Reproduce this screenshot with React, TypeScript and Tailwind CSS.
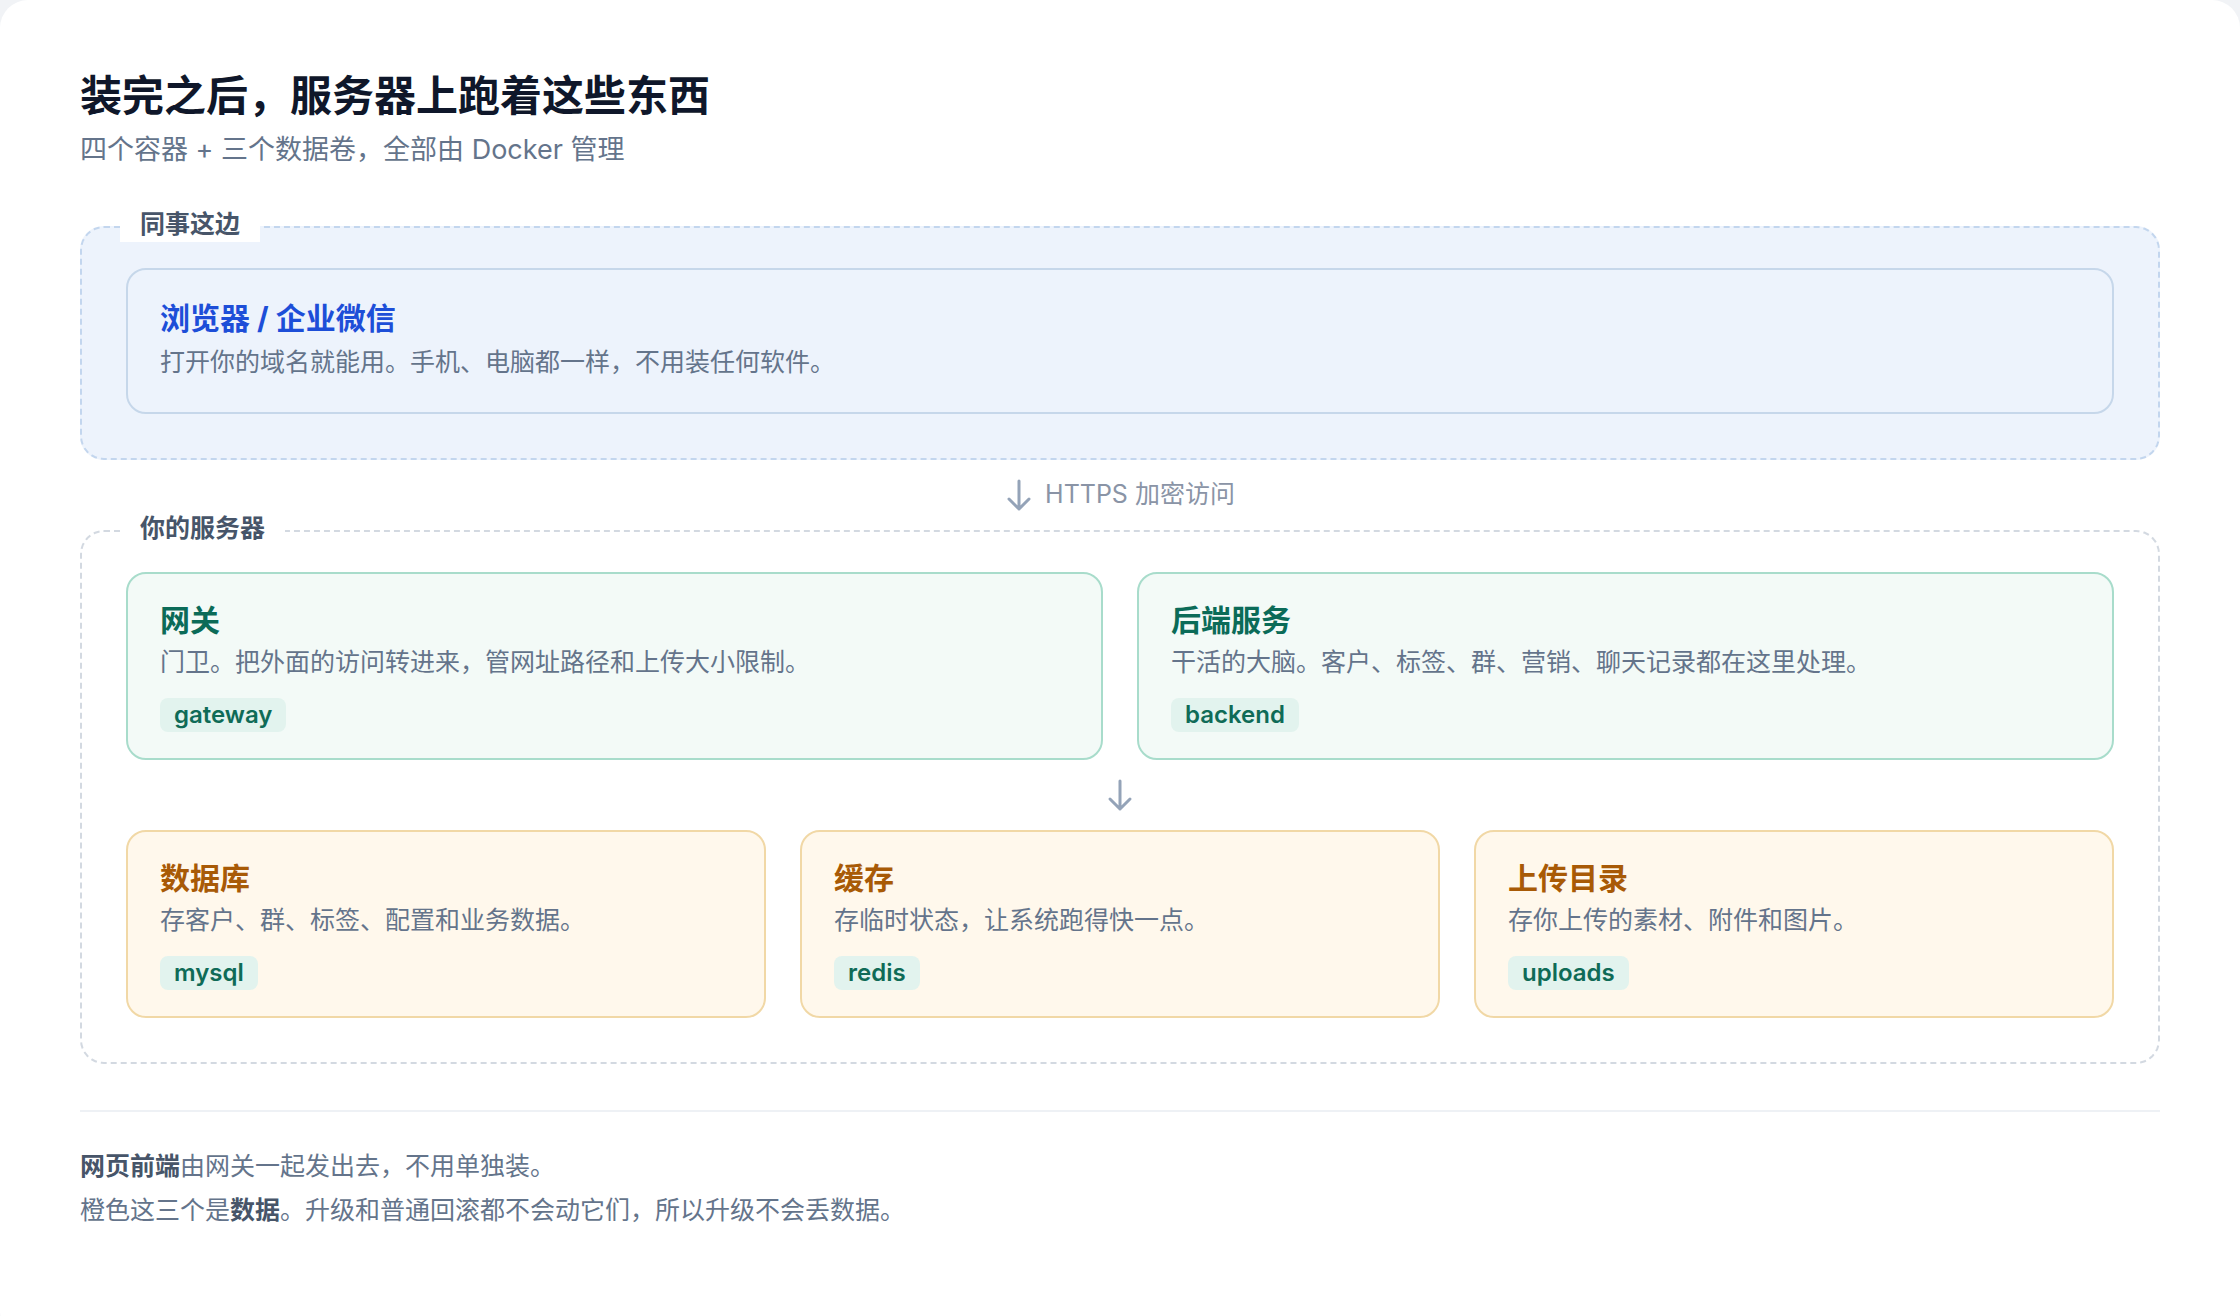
import React from "react";

const font = { fontFamily: '"Inter", "Noto Sans CJK SC", sans-serif' };

function Arrow({ className }: { className?: string }) {
  return (
    <svg width="28" height="34" viewBox="0 0 28 34" className={className} fill="none" stroke="currentColor" strokeWidth="3" strokeLinecap="round" strokeLinejoin="round">
      <path d="M14 3v28M4 21l10 10 10-10" />
    </svg>
  );
}

function Tag({ children }: { children: React.ReactNode }) {
  return (
    <span className="inline-block mt-[18px] px-[14px] py-[1px] rounded-[8px] bg-[#e2f3ee] text-[#0f6b57] text-[24px] font-semibold leading-[32px]">
      {children}
    </span>
  );
}

function Card({ tone, title, desc, tag }: { tone: "green" | "orange"; title: string; desc: string; tag: string }) {
  const box = tone === "green" ? "bg-[#f3faf7] border-[#a8dccb]" : "bg-[#fff8ec] border-[#f1d8a6]";
  const head = tone === "green" ? "text-[#0b6b58]" : "text-[#a85a06]";
  return (
    <div className={`flex-1 rounded-[20px] border-2 px-[32px] pt-[26px] pb-[26px] ${box}`}>
      <div className={`text-[30px] font-bold leading-[40px] ${head}`}>{title}</div>
      <div className="mt-[4px] text-[25px] leading-[36px] text-[#64748b]">{desc}</div>
      <Tag>{tag}</Tag>
    </div>
  );
}

export default function App() {
  return (
    <div className="min-h-screen bg-[#f1f3f6]" style={font}>
      <div className="w-full min-h-[1340px] bg-white rounded-[28px] px-[80px] pt-[68px]">
        <h1 className="text-[42px] font-bold leading-[56px] text-[#0f172a]">装完之后，服务器上跑着这些东西</h1>
        <p className="mt-[8px] text-[27px] leading-[36px] text-[#64748b]">四个容器 + 三个数据卷，全部由 Docker 管理</p>

        <div className="relative mt-[58px] rounded-[24px] border-2 border-dashed border-[#c3d6ee] bg-[#edf3fc] px-[44px] pt-[40px] pb-[44px]">
          <span className="absolute -top-[22px] left-[38px] bg-white px-[20px] text-[25px] font-semibold leading-[36px] text-[#475569]">同事这边</span>
          <div className="rounded-[20px] border-2 border-[#c6d7ea] px-[32px] pt-[28px] pb-[32px]">
            <div className="text-[30px] font-bold leading-[40px] text-[#1d4ed8]">浏览器 / 企业微信</div>
            <div className="mt-[6px] text-[25px] leading-[36px] text-[#64748b]">打开你的域名就能用。手机、电脑都一样，不用装任何软件。</div>
          </div>
        </div>

        <div className="flex items-center justify-center gap-[12px] h-[70px] text-[#94a3b8]">
          <Arrow />
          <span className="text-[25px] text-[#8a94a6]">HTTPS 加密访问</span>
        </div>

        <div className="relative rounded-[24px] border-2 border-dashed border-[#d3d9e1] px-[44px] pt-[40px] pb-[44px]">
          <span className="absolute -top-[22px] left-[38px] bg-white px-[20px] text-[25px] font-semibold leading-[36px] text-[#475569]">你的服务器</span>
          <div className="flex gap-[34px]">
            <Card tone="green" title="网关" desc="门卫。把外面的访问转进来，管网址路径和上传大小限制。" tag="gateway" />
            <Card tone="green" title="后端服务" desc="干活的大脑。客户、标签、群、营销、聊天记录都在这里处理。" tag="backend" />
          </div>
          <div className="flex justify-center h-[70px] items-center text-[#94a3b8]">
            <Arrow />
          </div>
          <div className="flex gap-[34px]">
            <Card tone="orange" title="数据库" desc="存客户、群、标签、配置和业务数据。" tag="mysql" />
            <Card tone="orange" title="缓存" desc="存临时状态，让系统跑得快一点。" tag="redis" />
            <Card tone="orange" title="上传目录" desc="存你上传的素材、附件和图片。" tag="uploads" />
          </div>
        </div>

        <div className="mt-[46px] border-t-2 border-[#eef1f5] pt-[32px] text-[25px] leading-[44px] text-[#64748b]">
          <p><b className="font-semibold text-[#475569]">网页前端</b>由网关一起发出去，不用单独装。</p>
          <p>橙色这三个是<b className="font-semibold text-[#475569]">数据</b>。升级和普通回滚都不会动它们，所以升级不会丢数据。</p>
        </div>
      </div>
    </div>
  );
}
